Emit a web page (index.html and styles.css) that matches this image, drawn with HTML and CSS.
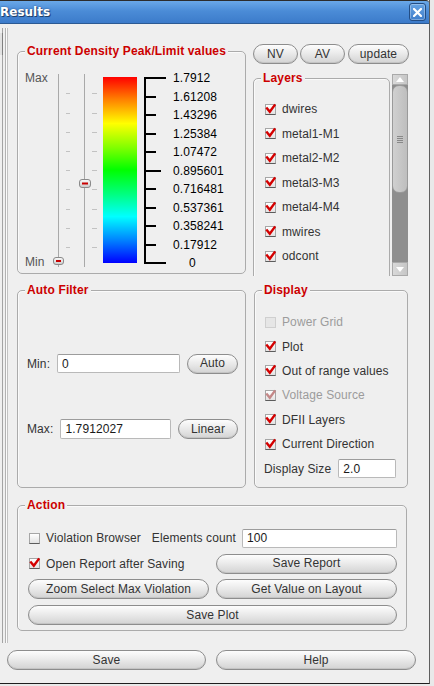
FILE: index.html
```html
<!DOCTYPE html>
<html>
<head>
<meta charset="utf-8">
<title>Results</title>
<link rel="stylesheet" href="styles.css">
</head>
<body>
<div class="window">
  <div class="titlebar">
    <span class="title">Results</span>
    <span class="close"><svg width="9" height="9" viewBox="0 0 9 9"><path d="M1 1L8 8M8 1L1 8" stroke="#fff" stroke-width="2.2" stroke-linecap="square"/></svg></span>
  </div>
  <div class="main">
    <div class="upper">
      <div class="strip"><div class="strip-tab"></div></div>
      <div class="content">
        <div class="row-a">
          <div class="group cd">
            <span class="group-title">Current Density Peak/Limit values</span>
            <div class="cd-body">
              <div class="mm"><span>Max</span><span>Min</span></div>
              <svg class="sliders" width="50" height="200" viewBox="0 0 50 200">
                <defs>
                  <linearGradient id="tg" x1="0" y1="0" x2="0" y2="1">
                    <stop offset="0" stop-color="#fbfbfb"/>
                    <stop offset="1" stop-color="#c9c9c9"/>
                  </linearGradient>
                </defs>
                <line x1="8.5" y1="4" x2="8.5" y2="197" stroke="#a9a9a9"/>
                <line x1="34.5" y1="4" x2="34.5" y2="197" stroke="#a9a9a9"/>
                <g stroke="#c2c2c2">
                  <line x1="16" y1="23.5" x2="20" y2="23.5"/><line x1="42" y1="23.5" x2="47" y2="23.5"/>
                  <line x1="16" y1="43.5" x2="20" y2="43.5"/><line x1="42" y1="43.5" x2="47" y2="43.5"/>
                  <line x1="16" y1="62.5" x2="20" y2="62.5"/><line x1="42" y1="62.5" x2="47" y2="62.5"/>
                  <line x1="16" y1="81.5" x2="20" y2="81.5"/><line x1="42" y1="81.5" x2="47" y2="81.5"/>
                  <line x1="16" y1="100.5" x2="20" y2="100.5"/><line x1="42" y1="100.5" x2="47" y2="100.5"/>
                  <line x1="16" y1="119.5" x2="20" y2="119.5"/><line x1="42" y1="119.5" x2="47" y2="119.5"/>
                  <line x1="16" y1="139.5" x2="20" y2="139.5"/><line x1="42" y1="139.5" x2="47" y2="139.5"/>
                  <line x1="16" y1="158.5" x2="20" y2="158.5"/><line x1="42" y1="158.5" x2="47" y2="158.5"/>
                  <line x1="16" y1="177.5" x2="20" y2="177.5"/><line x1="42" y1="177.5" x2="47" y2="177.5"/>
                </g>
                <rect x="3.5" y="187.5" width="10" height="7" rx="2.5" fill="url(#tg)" stroke="#8a8a8a"/>
                <rect x="6" y="190" width="5" height="2" fill="#c80000"/>
                <rect x="29.5" y="109.5" width="11" height="8" rx="2.5" fill="url(#tg)" stroke="#8a8a8a"/>
                <rect x="32" y="112.5" width="6" height="2" fill="#c80000"/>
              </svg>
              <div class="colorbar"></div>
              <div class="axis">
                <div class="ar"><span class="tk"><i class="long"></i></span><span class="lb">1.7912</span></div>
                <div class="ar"><span class="tk"><i></i></span><span class="lb">1.61208</span></div>
                <div class="ar"><span class="tk"><i></i></span><span class="lb">1.43296</span></div>
                <div class="ar"><span class="tk"><i></i></span><span class="lb">1.25384</span></div>
                <div class="ar"><span class="tk"><i></i></span><span class="lb">1.07472</span></div>
                <div class="ar"><span class="tk"><i class="mid"></i></span><span class="lb">0.895601</span></div>
                <div class="ar"><span class="tk"><i></i></span><span class="lb">0.716481</span></div>
                <div class="ar"><span class="tk"><i></i></span><span class="lb">0.537361</span></div>
                <div class="ar"><span class="tk"><i></i></span><span class="lb">0.358241</span></div>
                <div class="ar"><span class="tk"><i></i></span><span class="lb">0.17912</span></div>
                <div class="ar"><span class="tk"><i class="long"></i></span><span class="lb zero">0</span></div>
              </div>
            </div>
          </div>
          <div class="rcol">
            <div class="topbtns">
              <button class="btn nv">NV</button>
              <button class="btn av">AV</button>
              <button class="btn upd">update</button>
            </div>
            <div class="scrollarea">
              <div class="viewport">
                <div class="group layers">
                  <span class="group-title">Layers</span>
                  <div class="item"><span class="cb on"><svg width="11" height="11" viewBox="0 0 11 11"><path d="M1.3 4.6L4.8 8.8L10.2 1.4" fill="none" stroke="#d40000" stroke-width="2.4"/></svg></span>dwires</div>
                  <div class="item"><span class="cb on"><svg width="11" height="11" viewBox="0 0 11 11"><path d="M1.3 4.6L4.8 8.8L10.2 1.4" fill="none" stroke="#d40000" stroke-width="2.4"/></svg></span>metal1-M1</div>
                  <div class="item"><span class="cb on"><svg width="11" height="11" viewBox="0 0 11 11"><path d="M1.3 4.6L4.8 8.8L10.2 1.4" fill="none" stroke="#d40000" stroke-width="2.4"/></svg></span>metal2-M2</div>
                  <div class="item"><span class="cb on"><svg width="11" height="11" viewBox="0 0 11 11"><path d="M1.3 4.6L4.8 8.8L10.2 1.4" fill="none" stroke="#d40000" stroke-width="2.4"/></svg></span>metal3-M3</div>
                  <div class="item"><span class="cb on"><svg width="11" height="11" viewBox="0 0 11 11"><path d="M1.3 4.6L4.8 8.8L10.2 1.4" fill="none" stroke="#d40000" stroke-width="2.4"/></svg></span>metal4-M4</div>
                  <div class="item"><span class="cb on"><svg width="11" height="11" viewBox="0 0 11 11"><path d="M1.3 4.6L4.8 8.8L10.2 1.4" fill="none" stroke="#d40000" stroke-width="2.4"/></svg></span>mwires</div>
                  <div class="item"><span class="cb on"><svg width="11" height="11" viewBox="0 0 11 11"><path d="M1.3 4.6L4.8 8.8L10.2 1.4" fill="none" stroke="#d40000" stroke-width="2.4"/></svg></span>odcont</div>
                </div>
              </div>
              <div class="vscroll">
                <div class="sb-up"><svg width="8" height="5" viewBox="0 0 8 5"><path d="M0 5L4 0L8 5Z" fill="#fff"/></svg></div>
                <div class="sb-thumb"><span class="grip"></span></div>
                <div class="sb-track"></div>
                <div class="sb-down"><svg width="8" height="5" viewBox="0 0 8 5"><path d="M0 0L8 0L4 5Z" fill="#fff"/></svg></div>
              </div>
            </div>
          </div>
        </div>

        <div class="row-b">
          <div class="group af">
            <span class="group-title">Auto Filter</span>
            <div class="af-row"><span class="lbl">Min:</span><input class="field grow" value="0"><button class="btn pad">Auto</button></div>
            <div class="af-row tall"><span class="lbl">Max:</span><input class="field grow h20" value="1.7912027"><button class="btn pad">Linear</button></div>
          </div>
          <div class="group disp">
            <span class="group-title">Display</span>
            <div class="item dis"><span class="cb off"></span>Power Grid</div>
            <div class="item"><span class="cb on"><svg width="11" height="11" viewBox="0 0 11 11"><path d="M1.3 4.6L4.8 8.8L10.2 1.4" fill="none" stroke="#d40000" stroke-width="2.4"/></svg></span>Plot</div>
            <div class="item"><span class="cb on"><svg width="11" height="11" viewBox="0 0 11 11"><path d="M1.3 4.6L4.8 8.8L10.2 1.4" fill="none" stroke="#d40000" stroke-width="2.4"/></svg></span>Out of range values</div>
            <div class="item dis"><span class="cb on"><svg width="11" height="11" viewBox="0 0 11 11"><path d="M1.3 4.6L4.8 8.8L10.2 1.4" fill="none" stroke="#c48888" stroke-width="2.4"/></svg></span>Voltage Source</div>
            <div class="item"><span class="cb on"><svg width="11" height="11" viewBox="0 0 11 11"><path d="M1.3 4.6L4.8 8.8L10.2 1.4" fill="none" stroke="#d40000" stroke-width="2.4"/></svg></span>DFII Layers</div>
            <div class="item"><span class="cb on"><svg width="11" height="11" viewBox="0 0 11 11"><path d="M1.3 4.6L4.8 8.8L10.2 1.4" fill="none" stroke="#d40000" stroke-width="2.4"/></svg></span>Current Direction</div>
            <div class="dsrow"><span class="lbl">Display Size</span><input class="field ds" value="2.0"></div>
          </div>
        </div>

        <div class="group action">
          <span class="group-title">Action</span>
          <div class="act-row r1">
            <span class="cbitem"><span class="cb"></span>Violation Browser</span>
            <span class="lbl ec">Elements count</span>
            <input class="field grow" value="100">
          </div>
          <div class="act-row two">
            <span class="cbitem"><span class="cb on"><svg width="11" height="11" viewBox="0 0 11 11"><path d="M1.3 4.6L4.8 8.8L10.2 1.4" fill="none" stroke="#d40000" stroke-width="2.4"/></svg></span>Open Report after Saving</span>
            <button class="btn">Save Report</button>
          </div>
          <div class="act-row two">
            <button class="btn">Zoom Select Max Violation</button>
            <button class="btn">Get Value on Layout</button>
          </div>
          <div class="act-row one">
            <button class="btn">Save Plot</button>
          </div>
        </div>
      </div>
    </div>
    <div class="footer">
      <button class="btn save">Save</button>
      <button class="btn help">Help</button>
    </div>
  </div>
</div>
</body>
</html>
```

FILE: styles.css
```css
html, body {
  margin: 0;
  padding: 0;
}
body {
  width: 434px;
  height: 686px;
  overflow: hidden;
  background: #e9e9e9;
  font-family: "Liberation Sans", Arial, sans-serif;
  font-size: 12px;
  letter-spacing: 0.1px;
  color: #333;
}
.window {
  width: 430px;
  height: 684px;
  box-sizing: border-box;
  background: #efefef;
  border-right: 1px solid #5e5e5e;
  border-bottom: 1px solid #1e1e1e;
  display: flex;
  flex-direction: column;
}
.titlebar {
  height: 24px;
  box-sizing: border-box;
  border-top: 1px solid #2c2c2c;
  border-bottom: 1px solid #2c5a93;
  background: linear-gradient(#6aa8e8, #4b8cd7 45%, #3c7bca);
  display: flex;
  align-items: center;
  justify-content: space-between;
  padding-right: 3px;
  border-top-right-radius: 3px;
}
.title {
  font-family: "DejaVu Sans", sans-serif;
  font-weight: bold;
  font-size: 12px;
  letter-spacing: 0;
  color: #fff;
  text-shadow: 1px 1px 0 #20406a, 0 0 2px #2a4f80;
}
.close {
  width: 17px;
  height: 18px;
  box-sizing: border-box;
  border: 1px solid #234d84;
  border-radius: 3px;
  background: linear-gradient(#66a3e3, #3f7ecb);
  box-shadow: inset 0 0 0 1px rgba(255,255,255,0.3);
  display: flex;
  align-items: center;
  justify-content: center;
}
.main {
  display: flex;
  flex-direction: column;
}
.upper {
  height: 619px;
  display: flex;
}
.strip {
  width: 9px;
  margin-top: 4px;
  height: 615px;
  background: linear-gradient(to right, transparent 0 2px, #a3a3a3 2px 3px, transparent 3px 5px, #b2b2b2 5px 6px, #fbfbfb 6px 7px, #c2c2c2 7px 8px, transparent 8px);
}
.strip-tab {
  width: 2px;
  height: 22px;
  margin-top: 5px;
  background: #e2e2e2;
  border-right: 1px solid #808080;
}
.content {
  margin-left: 8px;
  display: flex;
  flex-direction: column;
}

/* group boxes */
.group {
  position: relative;
  box-sizing: border-box;
  border: 1px solid #ababab;
  border-radius: 5px;
  box-shadow: inset 1px 1px 0 #fafafa;
}
.group-title {
  position: absolute;
  top: -8px;
  left: 7px;
  padding: 0 2px;
  background: #efefef;
  color: #cc0000;
  font-weight: bold;
  line-height: 14px;
  letter-spacing: 0.15px;
  white-space: nowrap;
}

/* row A */
.row-a {
  margin-top: 20px;
  display: flex;
  align-items: flex-start;
  gap: 7px;
}
.cd {
  margin-top: 7px;
  width: 229px;
  height: 223px;
}
.cd-body {
  display: flex;
  align-items: flex-start;
  padding: 18px 0 0 7px;
}
.mm {
  width: 25px;
  height: 198px;
  margin-top: 1px;
  display: flex;
  flex-direction: column;
  justify-content: space-between;
  line-height: 14px;
  color: #555;
}
.sliders {
  display: block;
  flex: none;
}
.colorbar {
  margin-left: 3px;
  margin-top: 7px;
  width: 34px;
  height: 186px;
  background: linear-gradient(to bottom, #ff0000 0%, #ff8000 12%, #ffff00 25%, #80ff00 38%, #00ff00 50%, #00ff80 63%, #00ffff 75%, #0080ff 88%, #0000ff 100%);
}
.axis {
  position: relative;
  margin-left: 7px;
  margin-top: -1px;
}
.axis::before {
  content: "";
  position: absolute;
  left: 0;
  top: 8.25px;
  bottom: 8.25px;
  width: 2px;
  background: #000;
}
.ar {
  height: 18.5px;
  display: flex;
  align-items: center;
}
.tk {
  width: 29px;
  display: flex;
}
.tk i {
  display: block;
  width: 12px;
  height: 2px;
  background: #000;
}
.tk i.long { width: 22px; }
.tk i.mid { width: 17px; }
.lb {
  color: #000;
  line-height: 14px;
  white-space: nowrap;
}
.lb.zero { margin-left: 16px; }

/* right column */
.rcol {
  width: 156px;
  display: flex;
  flex-direction: column;
}
.topbtns {
  display: flex;
  height: 20px;
}
.topbtns .nv { width: 45px; }
.topbtns .av { width: 45px; margin-left: 2px; }
.topbtns .upd { width: 61px; margin-left: 3px; }

.btn {
  box-sizing: border-box;
  height: 20px;
  padding: 0;
  margin: 0;
  border: 1px solid #8d8d8d;
  border-radius: 10px;
  background: linear-gradient(#fdfdfd, #ebebeb 45%, #d3d3d3);
  box-shadow: inset 0 -1px 0 #c4c4c4;
  font-family: "Liberation Sans", Arial, sans-serif;
  font-size: 12px;
  letter-spacing: 0.1px;
  color: #333;
  line-height: 17px;
  text-align: center;
  white-space: nowrap;
}
.btn.pad { padding: 0 12px; }

.scrollarea {
  margin-top: 6px;
  height: 206px;
  display: flex;
}
.viewport {
  width: 139px;
  height: 206px;
  overflow: hidden;
}
.layers {
  width: 137px;
  margin-top: 8px;
  height: 230px;
  padding: 18px 0 0 11px;
}
.item {
  height: 24.5px;
  display: flex;
  align-items: center;
  gap: 6px;
  color: #333;
  white-space: nowrap;
}
.item.dis { color: #9c9c9c; }
.cb {
  flex: none;
  position: relative;
  width: 11px;
  height: 11px;
  box-sizing: border-box;
  border: 1px solid #a6a6a6;
  border-bottom-color: #5c5c5c;
  background: linear-gradient(#ffffff, #e2e2e2);
}
.cb svg {
  position: absolute;
  left: -1px;
  top: -2px;
}
.cb.off {
  border-color: #cfcfcf;
  background: #e6e6e6;
}
.vscroll {
  width: 16px;
  margin-top: 4px;
  height: 202px;
  display: flex;
  flex-direction: column;
  background: #8e8e8e;
}
.sb-up, .sb-down {
  display: flex;
  align-items: center;
  justify-content: center;
  background: linear-gradient(to right, #d9d9d9, #c6c6c6);
  box-sizing: border-box;
  border: 1px solid #a9a9a9;
}
.sb-up { height: 11px; }
.sb-down { height: 14px; }
.sb-thumb {
  height: 108px;
  box-sizing: border-box;
  border: 1px solid #9a9a9a;
  border-radius: 7px;
  background: linear-gradient(to right, #d0d0d0, #bebebe);
  display: flex;
  align-items: center;
  justify-content: center;
}
.grip {
  width: 6px;
  height: 7px;
  background: repeating-linear-gradient(to bottom, #888 0 1px, transparent 1px 2px);
}
.sb-track { flex: 1; }

/* row B */
.row-b {
  margin-top: 14px;
  display: flex;
  gap: 8px;
}
.af {
  width: 229px;
  height: 198px;
  padding: 63px 7px 0 9px;
  display: flex;
  flex-direction: column;
  gap: 46px;
}
.af-row {
  display: flex;
  align-items: center;
  gap: 7px;
  height: 19px;
}
.af-row.tall { height: 20px; }
.lbl {
  color: #333;
  white-space: nowrap;
}
.field {
  box-sizing: border-box;
  height: 19px;
  margin: 0;
  padding: 0 4px;
  border: 1px solid #b9b9b9;
  border-top-color: #9c9c9c;
  border-radius: 2px;
  background: #fff;
  font-family: "Liberation Sans", Arial, sans-serif;
  font-size: 12px;
  letter-spacing: 0.1px;
  color: #1a1a1a;
  min-width: 0;
}
.field.h20 { height: 20px; }
.grow { flex: 1; }
.disp {
  width: 154px;
  height: 198px;
  padding: 19px 0 0 10px;
}
.disp .item { height: 24.4px; }
.dsrow {
  height: 24.4px;
  margin-left: -1px;
  display: flex;
  align-items: center;
  gap: 7px;
}
.field.ds { width: 58px; }

/* action */
.action {
  margin-top: 17px;
  width: 390px;
  height: 126px;
  padding: 22px 9px 0 10px;
  display: flex;
  flex-direction: column;
  gap: 5.7px;
}
.act-row {
  height: 20px;
  display: flex;
  align-items: center;
}
.act-row.two {
  display: grid;
  grid-template-columns: 1fr 1fr;
  gap: 7px;
}
.act-row.one {
  display: grid;
  grid-template-columns: 1fr;
}
.act-row .btn { width: 100%; }
.cbitem {
  display: flex;
  align-items: center;
  gap: 6px;
  margin-left: 1px;
  white-space: nowrap;
}
.ec { margin-left: 11px; margin-right: 6px; }

/* footer */
.footer {
  margin-top: 7px;
  padding-left: 7px;
  display: flex;
  gap: 10px;
}
.footer .save { width: 199px; }
.footer .help { width: 200px; }
```
